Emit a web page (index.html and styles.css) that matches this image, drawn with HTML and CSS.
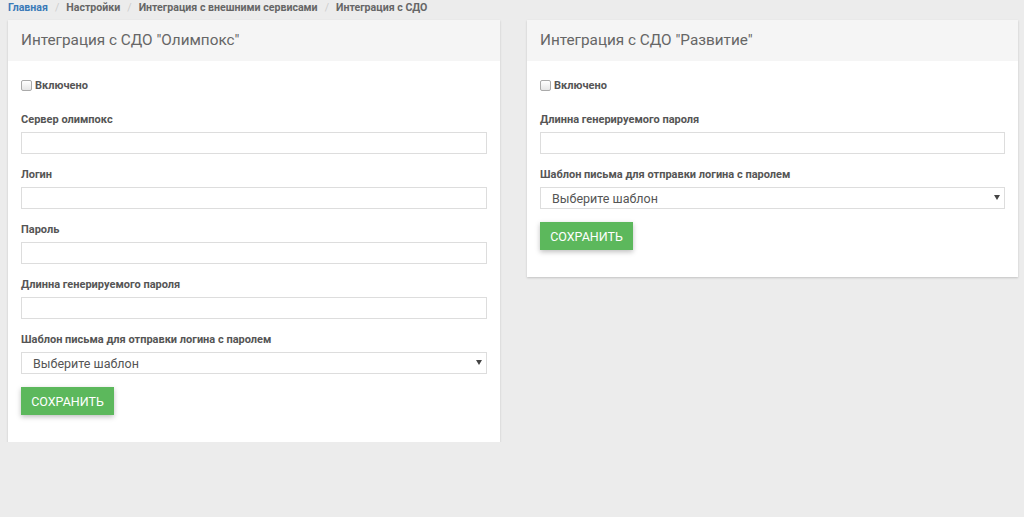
FILE: index.html
```html
<!DOCTYPE html>
<html lang="ru">

<head>
    <meta charset="UTF-8">
    <meta name="viewport" content="width=device-width, initial-scale=1.0">
    <title>Интеграция с СДО</title>
    <link rel="stylesheet" href="styles.css">
</head>

<body>
    <ol class="breadcrumb">
        <li><a href="#">Главная</a></li>
        <li>Настройки</li>
        <li>Интеграция с внешними сервисами</li>
        <li>Интеграция с СДО</li>
    </ol>
    <main class="columns">
        <section class="panel">
            <div class="panel-heading">Интеграция с СДО "Олимпокс"</div>
            <form class="panel-body">
                <label class="check"><input type="checkbox"> Включено</label>

                <label class="field-label" for="olympox-server">Сервер олимпокс</label>
                <input class="field" type="text" id="olympox-server">

                <label class="field-label" for="olympox-login">Логин</label>
                <input class="field" type="text" id="olympox-login">

                <label class="field-label" for="olympox-password">Пароль</label>
                <input class="field" type="password" id="olympox-password">

                <label class="field-label" for="olympox-length">Длинна генерируемого пароля</label>
                <input class="field" type="text" id="olympox-length">

                <label class="field-label" for="olympox-template">Шаблон письма для отправки логина с паролем</label>
                <div class="select-wrap">
                    <select class="field select" id="olympox-template">
                        <option>Выберите шаблон</option>
                    </select>
                </div>

                <button type="button" class="btn-save">Сохранить</button>
            </form>
        </section>
        <section class="panel">
            <div class="panel-heading">Интеграция с СДО "Развитие"</div>
            <form class="panel-body">
                <label class="check"><input type="checkbox"> Включено</label>

                <label class="field-label" for="razvitie-length">Длинна генерируемого пароля</label>
                <input class="field" type="text" id="razvitie-length">

                <label class="field-label" for="razvitie-template">Шаблон письма для отправки логина с паролем</label>
                <div class="select-wrap">
                    <select class="field select" id="razvitie-template">
                        <option>Выберите шаблон</option>
                    </select>
                </div>

                <button type="button" class="btn-save">Сохранить</button>
            </form>
        </section>
    </main>
</body>

</html>
```

FILE: styles.css
```css
body {
    font-family: Roboto, 'Liberation Sans', sans-serif;
    background-color: #ececec;
    margin: 0;
    padding: 0 8px;
    color: #555;
}

.breadcrumb {
    display: flex;
    list-style: none;
    margin: 0;
    padding: 0;
    height: 20px;
    line-height: 15px;
    font-size: 10.6px;
    font-weight: 700;
    color: #666;
}

.breadcrumb li + li::before {
    content: "/";
    color: #ccc;
    font-weight: 400;
    padding: 0 7px;
}

.breadcrumb a {
    color: #3a7ab8;
    text-decoration: none;
}

.columns {
    display: grid;
    grid-template-columns: 492px 491px;
    column-gap: 27px;
    align-items: start;
}

.panel {
    background-color: #fff;
    box-shadow: 0 1px 2px rgba(0, 0, 0, 0.18);
}

.panel-heading {
    background-color: #f5f5f5;
    color: #666;
    font-size: 15.3px;
    height: 41px;
    line-height: 41px;
    padding: 0 13px;
}

.panel-body {
    display: flex;
    flex-direction: column;
    align-items: flex-start;
    padding: 17px 13px 27px;
}

.check {
    display: flex;
    align-items: center;
    gap: 3px;
    height: 14px;
    font-size: 11px;
    font-weight: 700;
    margin-bottom: 21px;
    color: #555;
}

.check input {
    appearance: none;
    width: 11px;
    height: 11px;
    margin: 0;
    border: 1px solid #aaa;
    border-radius: 2px;
    background: linear-gradient(#fff, #e6e6e6);
}

.field-label {
    font-size: 11px;
    font-weight: 700;
    line-height: 14px;
    margin-bottom: 5px;
    color: #555;
}

.field {
    box-sizing: border-box;
    width: 100%;
    height: 22px;
    margin: 0 0 14px;
    border: 1px solid #ddd;
    border-radius: 0;
    background-color: #fff;
    font-family: inherit;
}

.select-wrap {
    position: relative;
    width: 100%;
}

.select-wrap::after {
    content: "";
    position: absolute;
    right: 5px;
    top: 8px;
    border-left: 3px solid transparent;
    border-right: 3px solid transparent;
    border-top: 5px solid #444;
}

.select {
    appearance: none;
    margin-bottom: 13px;
    padding: 0 11px;
    font-size: 12.5px;
    color: #555;
}

.btn-save {
    background-color: #5cb85c;
    color: white;
    border: none;
    height: 28px;
    width: 93px;
    padding: 0;
    font-family: inherit;
    font-size: 12.5px;
    text-transform: uppercase;
    box-shadow: 0 2px 5px rgba(0, 0, 0, 0.25);
    cursor: pointer;
}
```
